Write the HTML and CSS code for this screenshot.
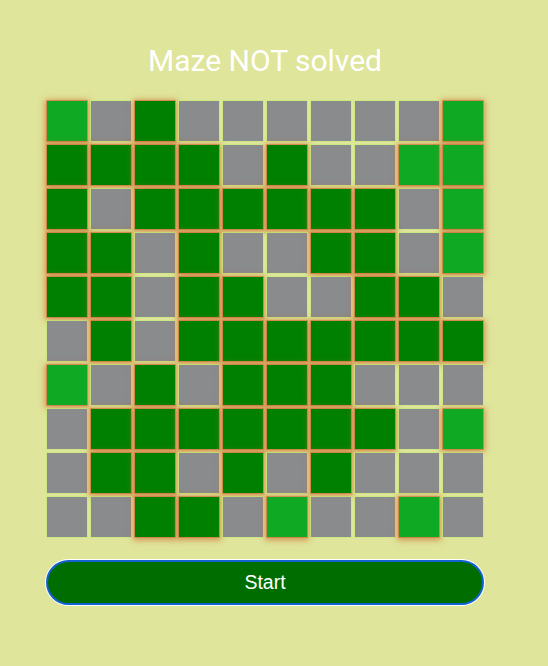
FILE: index.html
```html
<!DOCTYPE html>
<html>
<head>
<meta charset="utf-8">
<link rel="stylesheet" href="styles.css">
</head>
<body>
<div class="app">
  <h1 class="title">Maze NOT solved</h1>
  <div class="grid" id="grid">
    <div class="cell l"></div><div class="cell g"></div><div class="cell d"></div><div class="cell g"></div><div class="cell g"></div><div class="cell g"></div><div class="cell g"></div><div class="cell g"></div><div class="cell g"></div><div class="cell l"></div>
    <div class="cell d"></div><div class="cell d"></div><div class="cell d"></div><div class="cell d"></div><div class="cell g"></div><div class="cell d"></div><div class="cell g"></div><div class="cell g"></div><div class="cell l"></div><div class="cell l"></div>
    <div class="cell d"></div><div class="cell g"></div><div class="cell d"></div><div class="cell d"></div><div class="cell d"></div><div class="cell d"></div><div class="cell d"></div><div class="cell d"></div><div class="cell g"></div><div class="cell l"></div>
    <div class="cell d"></div><div class="cell d"></div><div class="cell g"></div><div class="cell d"></div><div class="cell g"></div><div class="cell g"></div><div class="cell d"></div><div class="cell d"></div><div class="cell g"></div><div class="cell l"></div>
    <div class="cell d"></div><div class="cell d"></div><div class="cell g"></div><div class="cell d"></div><div class="cell d"></div><div class="cell g"></div><div class="cell g"></div><div class="cell d"></div><div class="cell d"></div><div class="cell g"></div>
    <div class="cell g"></div><div class="cell d"></div><div class="cell g"></div><div class="cell d"></div><div class="cell d"></div><div class="cell d"></div><div class="cell d"></div><div class="cell d"></div><div class="cell d"></div><div class="cell d"></div>
    <div class="cell l"></div><div class="cell g"></div><div class="cell d"></div><div class="cell g"></div><div class="cell d"></div><div class="cell d"></div><div class="cell d"></div><div class="cell g"></div><div class="cell g"></div><div class="cell g"></div>
    <div class="cell g"></div><div class="cell d"></div><div class="cell d"></div><div class="cell d"></div><div class="cell d"></div><div class="cell d"></div><div class="cell d"></div><div class="cell d"></div><div class="cell g"></div><div class="cell l"></div>
    <div class="cell g"></div><div class="cell d"></div><div class="cell d"></div><div class="cell g"></div><div class="cell d"></div><div class="cell g"></div><div class="cell d"></div><div class="cell g"></div><div class="cell g"></div><div class="cell g"></div>
    <div class="cell g"></div><div class="cell g"></div><div class="cell d"></div><div class="cell d"></div><div class="cell g"></div><div class="cell l"></div><div class="cell g"></div><div class="cell g"></div><div class="cell l"></div><div class="cell g"></div>
  </div>
  <button class="start">Start</button>
</div>
</body>
</html>
```
FILE: styles.css
```css
html, body {
  margin: 0;
  padding: 0;
  background: #dfe59b;
}
body {
  min-height: 666px;
}
.app {
  width: 440px;
  margin-left: 45px;
  padding-top: 43px;
  display: flex;
  flex-direction: column;
  align-items: center;
}
.title {
  margin: 0;
  font-family: Roboto, "Liberation Sans", sans-serif;
  font-weight: 400;
  font-size: 30px;
  line-height: 35px;
  color: #ffffff;
  text-align: center;
}
.grid {
  margin-top: 22px;
  display: grid;
  grid-template-columns: repeat(10, 42px);
  grid-auto-rows: 42px;
  gap: 2px;
}
.cell {
  box-sizing: border-box;
  border: 1px solid rgba(190, 238, 110, 0.55);
  background-clip: padding-box;
}
.cell.g {
  background-color: #898b8d;
}
.cell.d {
  background-color: #008000;
  border-color: rgba(205, 115, 55, 0.6);
  box-shadow: 0 1px 6px 1px rgba(205, 110, 50, 0.7);
}
.cell.l {
  background-color: #0fa923;
  border-color: rgba(205, 115, 55, 0.6);
  box-shadow: 0 1px 6px 1px rgba(205, 110, 50, 0.7);
}
.start {
  margin-top: 22px;
  width: 438px;
  height: 45px;
  box-sizing: border-box;
  border: 2px solid #1262d2;
  border-radius: 23px;
  box-shadow: 0 0 0 1px #ffffff;
  background: #006d00;
  color: #ffffff;
  font-family: "Liberation Sans", Arial, sans-serif;
  font-size: 19.5px;
  padding: 0;
}
```
